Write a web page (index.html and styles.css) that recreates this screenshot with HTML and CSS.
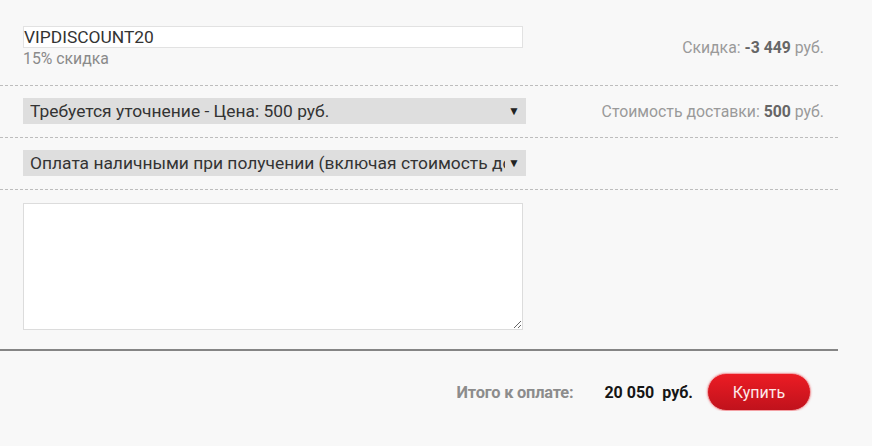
FILE: index.html
```html
<!DOCTYPE html>
<html lang="ru">
<head>
<meta charset="utf-8">
<link rel="stylesheet" href="styles.css">
</head>
<body>
<div class="order">
  <div class="row row-coupon">
    <div class="left">
      <div class="field">VIPDISCOUNT20</div>
      <div class="caption">15% скидка</div>
    </div>
    <div class="right">Скидка: <b>-3 449</b> руб.</div>
  </div>
  <div class="row row-select">
    <div class="left">
      <div class="select"><span class="select-text">Требуется уточнение - Цена: 500 руб.</span><span class="arrow">▼</span></div>
    </div>
    <div class="right">Стоимость доставки: <b>500</b> руб.</div>
  </div>
  <div class="row row-select">
    <div class="left">
      <div class="select"><span class="select-text">Оплата наличными при получении (включая стоимость доставки)</span><span class="arrow">▼</span></div>
    </div>
  </div>
  <div class="row row-comment">
    <div class="left">
      <textarea class="comment"></textarea>
    </div>
  </div>
  <div class="total">
    <span class="total-label">Итого к оплате:</span>
    <span class="total-value">20 050<span class="currency">руб.</span></span>
    <button class="buy">Купить</button>
  </div>
</div>
</body>
</html>
```
FILE: styles.css
```css
html, body {
  margin: 0;
  padding: 0;
  background: #f8f8f8;
  font-family: Roboto, "Liberation Sans", sans-serif;
}
.order {
  width: 838px;
}
.row {
  display: flex;
  justify-content: space-between;
  align-items: center;
  padding-left: 23px;
  padding-right: 14px;
  border-bottom: 1px dashed #bdbdbd;
}
.row-coupon {
  padding-top: 26px;
  padding-bottom: 17px;
}
.row-select {
  padding-top: 12px;
  padding-bottom: 13px;
}
.row-comment {
  padding-top: 13px;
  padding-bottom: 19px;
  border-bottom: 2px solid #858585;
}
.field {
  box-sizing: border-box;
  width: 500px;
  height: 22px;
  background: #fff;
  border: 1px solid #e2e2e2;
  font-size: 17.4px;
  line-height: 20px;
  color: #333;
  padding-left: 0;
}
.caption {
  margin-top: 1px;
  font-size: 15.8px;
  line-height: 19px;
  color: #8a8a8a;
}
.right {
  font-size: 15.8px;
  color: #9a9a9a;
}
.right b {
  color: #666;
  font-weight: 700;
}
.select {
  box-sizing: border-box;
  width: 503px;
  height: 26px;
  background: #dedede;
  display: flex;
  align-items: center;
  padding-left: 7px;
  padding-right: 5px;
  font-size: 17.4px;
  color: #333;
}
.select-text {
  flex: 1;
  white-space: nowrap;
  overflow: hidden;
}
.arrow {
  font-size: 12px;
  color: #222;
  margin-left: 3px;
  padding-right: 1px;
}
.comment {
  display: block;
  box-sizing: border-box;
  width: 500px;
  height: 127px;
  margin: 0;
  background: #fff;
  border: 1px solid #dcdcdc;
}
.total {
  display: flex;
  justify-content: flex-end;
  align-items: center;
  padding-top: 22px;
  padding-right: 27px;
}
.total-label {
  font-size: 16.4px;
  font-weight: 700;
  color: #8c8c8c;
  margin-right: 31px;
  letter-spacing: -0.2px;
}
.total-value {
  font-size: 16px;
  font-weight: 700;
  color: #151515;
  margin-right: 14px;
}
.currency {
  margin-left: 8px;
}
.buy {
  box-sizing: border-box;
  width: 104px;
  height: 38px;
  border-radius: 19px;
  border: 1px solid #f3a0a4;
  background: linear-gradient(#ec1c24, #c0121c);
  color: #fde8e8;
  font-family: Roboto, "Liberation Sans", sans-serif;
  font-size: 16px;
  box-shadow: 0 0 2px rgba(230, 60, 70, 0.5);
  padding: 0;
}
```
